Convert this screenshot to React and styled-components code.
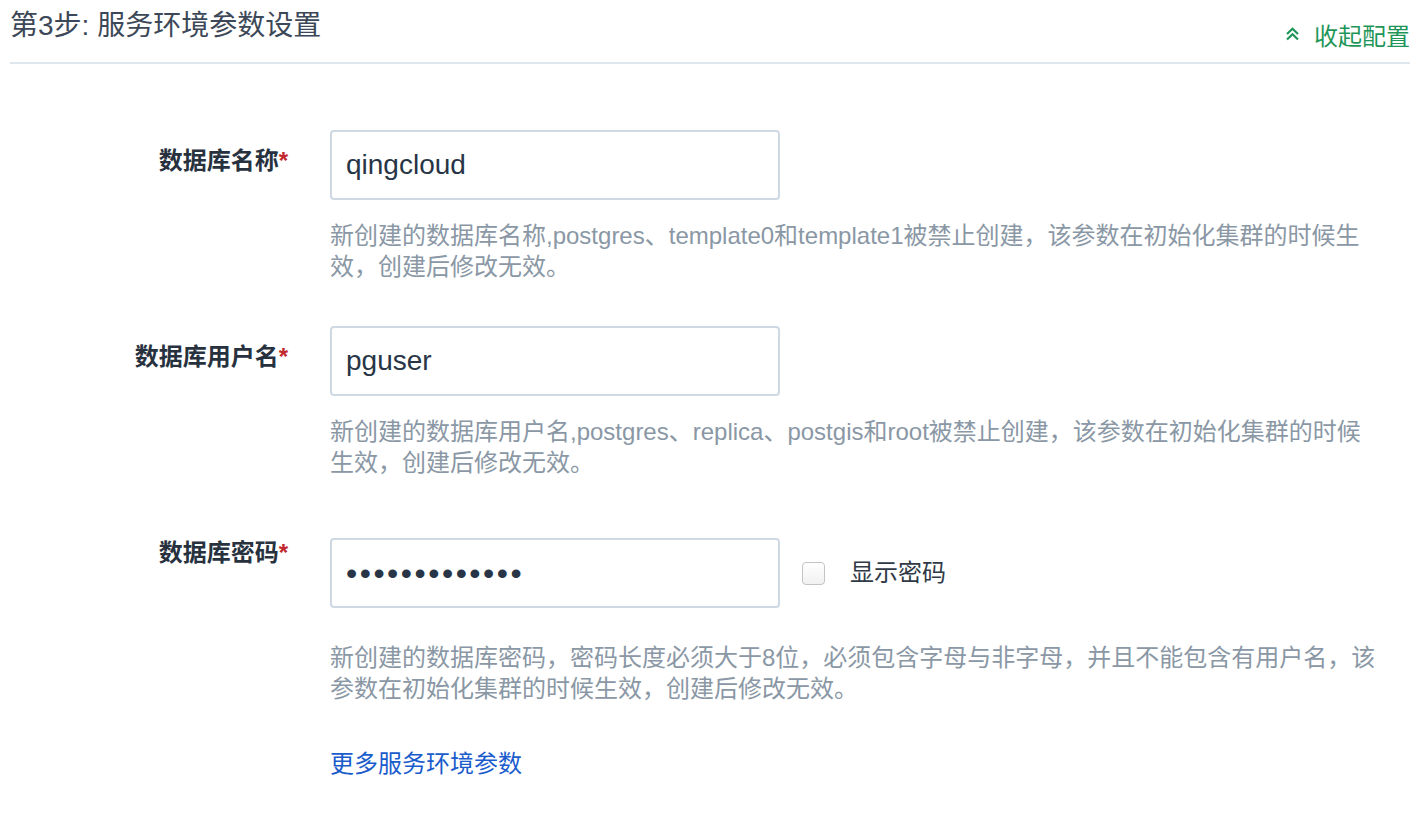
import React, { useState } from "react";
import styled, { createGlobalStyle } from "styled-components";

const GlobalStyle = createGlobalStyle`
  html, body {
    margin: 0;
    background: #fff;
  }
  body {
    font-family: "Liberation Sans", "Noto Sans CJK SC", sans-serif;
  }
`;

const Page = styled.div`
  padding: 0 16px 0 10px;
`;

const Header = styled.div`
  display: flex;
  justify-content: space-between;
  height: 62px;
  border-bottom: 2px solid #dee6ee;
`;

const Title = styled.h2`
  margin: 8px 0 0;
  font-size: 28px;
  line-height: 36px;
  font-weight: normal;
  color: #3c4857;
`;

const Toggle = styled.a`
  display: flex;
  align-items: center;
  gap: 14px;
  margin-top: 18px;
  height: 32px;
  font-size: 24px;
  color: #1f9659;
  cursor: pointer;
`;

const Form = styled.div`
  padding-top: 66px;
  display: flex;
  flex-direction: column;
  gap: 44px;
`;

const Row = styled.div`
  display: grid;
  grid-template-columns: 278px 1fr;
  column-gap: 42px;
`;

const Label = styled.label`
  text-align: right;
  padding-top: 15px;
  font-size: 24px;
  line-height: 31px;
  font-weight: bold;
  color: #28323f;
`;

const Star = styled.span`
  color: #c1272d;
`;

const Field = styled.div`
  display: flex;
  flex-direction: column;
`;

const InputLine = styled.div`
  display: flex;
  align-items: center;
  padding: ${(p) => (p.$spaced ? "16px 0 14px" : "0")};
`;

const TextInput = styled.input`
  box-sizing: border-box;
  width: 450px;
  height: 70px;
  margin: 0;
  padding: 0 14px;
  border: 2px solid #cfd9e3;
  border-radius: 4px;
  font-family: "Liberation Sans", "Noto Sans CJK SC", sans-serif;
  font-size: ${(p) => (p.type === "password" ? "32px" : "28px")};
  color: #283546;
  outline: none;
  letter-spacing: ${(p) => (p.type === "password" ? "2.5px" : "0")};
`;

const Check = styled.input`
  appearance: none;
  box-sizing: border-box;
  width: 23px;
  height: 23px;
  margin: 0 25px 0 22px;
  border: 1px solid #c4c4c4;
  border-radius: 4px;
  background: linear-gradient(#ffffff, #f1f1f1);
`;

const CheckText = styled.span`
  padding-bottom: 5px;
  font-size: 24px;
  color: #303a46;
`;

const Help = styled.p`
  margin: 20px 0 0;
  padding-right: 30px;
  font-size: 24px;
  line-height: 31px;
  color: #8a97a5;
`;

const MoreLink = styled.a`
  grid-column: 2;
  font-size: 24px;
  line-height: 31px;
  color: #1a5ccc;
  cursor: pointer;
`;

const ChevronsUp = () => (
  <svg width="15" height="14" viewBox="0 0 15 14" fill="none" stroke="currentColor" strokeWidth="2.2">
    <path d="M2 7 L7.5 1.8 L13 7" />
    <path d="M2 12.5 L7.5 7.3 L13 12.5" />
  </svg>
);

const fields = [
  {
    label: "数据库名称",
    value: "qingcloud",
    help: "新创建的数据库名称,postgres、template0和template1被禁止创建，该参数在初始化集群的时候生效，创建后修改无效。",
  },
  {
    label: "数据库用户名",
    value: "pguser",
    help: "新创建的数据库用户名,postgres、replica、postgis和root被禁止创建，该参数在初始化集群的时候生效，创建后修改无效。",
  },
];

export default function App() {
  const [show, setShow] = useState(false);
  return (
    <Page>
      <GlobalStyle />
      <Header>
        <Title>第3步: 服务环境参数设置</Title>
        <Toggle>
          <ChevronsUp />
          收起配置
        </Toggle>
      </Header>
      <Form>
        {fields.map((f) => (
          <Row key={f.label}>
            <Label>
              {f.label}
              <Star>*</Star>
            </Label>
            <Field>
              <InputLine>
                <TextInput defaultValue={f.value} />
              </InputLine>
              <Help>{f.help}</Help>
            </Field>
          </Row>
        ))}
        <Row>
          <Label>
            数据库密码<Star>*</Star>
          </Label>
          <Field>
            <InputLine $spaced>
              <TextInput type={show ? "text" : "password"} defaultValue="qingcloud1234" />
              <Check type="checkbox" checked={show} onChange={() => setShow(!show)} />
              <CheckText>显示密码</CheckText>
            </InputLine>
            <Help>新创建的数据库密码，密码长度必须大于8位，必须包含字母与非字母，并且不能包含有用户名，该参数在初始化集群的时候生效，创建后修改无效。</Help>
          </Field>
        </Row>
        <Row>
          <MoreLink>更多服务环境参数</MoreLink>
        </Row>
      </Form>
    </Page>
  );
}
